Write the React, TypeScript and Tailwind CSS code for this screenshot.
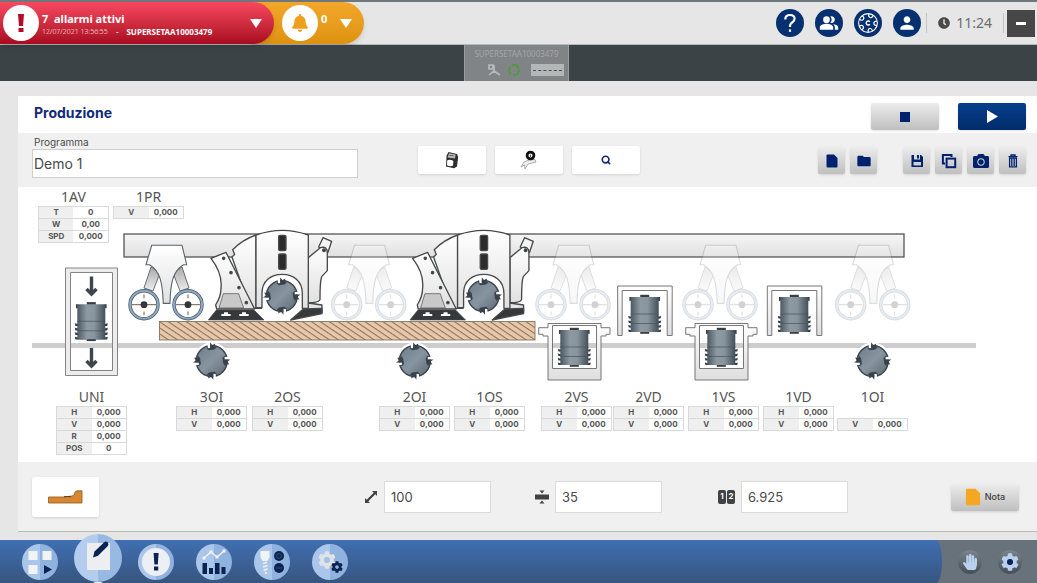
import { useState } from 'react';
import type { ReactNode } from 'react';
import { Search } from 'lucide-react';
import { FaBell, FaCamera, FaClock, FaCog, FaHandPaper } from 'react-icons/fa';
import { MdFolder, MdPeopleAlt, MdPerson } from 'react-icons/md';

// --- DATI DELLE STAZIONI ---
type Stazione = { nome: string; x: number; righe: [string, string][]; vuote?: number };

const LARGHEZZA = 1019;

const STAZIONI_ALTE: Stazione[] = [
  { nome: '1AV', x: 20, righe: [['T', '0'], ['W', '0,00'], ['SPD', '0,000']] },
  { nome: '1PR', x: 95, righe: [['V', '0,000']] },
];

const HV: [string, string][] = [['H', '0,000'], ['V', '0,000']];

const STAZIONI_BASSE: Stazione[] = [
  { nome: 'UNI', x: 38, righe: [...HV, ['R', '0,000'], ['POS', '0']] },
  { nome: '3OI', x: 158, righe: HV },
  { nome: '2OS', x: 234, righe: HV },
  { nome: '2OI', x: 361, righe: HV },
  { nome: '1OS', x: 436, righe: HV },
  { nome: '2VS', x: 523, righe: HV },
  { nome: '2VD', x: 595, righe: HV },
  { nome: '1VS', x: 670, righe: HV },
  { nome: '1VD', x: 745, righe: HV },
  { nome: '1OI', x: 819, righe: [['V', '0,000']], vuote: 1 },
];

function Lettura({ stazione }: { stazione: Stazione }) {
  return (
    <div className="absolute top-0 w-[71px]" style={{ left: `${(stazione.x / LARGHEZZA) * 100}%` }}>
      <table className="w-full table-fixed border-collapse text-[8px] leading-[11px] font-bold text-[#555]">
        <caption className="h-[19px] text-center font-['Noto_Sans',sans-serif] text-sm leading-[19px] font-normal text-[#555]">
          {stazione.nome}
        </caption>
        <tbody>
          {stazione.vuote ? <tr className="h-3"><td colSpan={2} /></tr> : null}
          {stazione.righe.map(([sigla, valore]) => (
            <tr key={sigla} className="h-3 border border-[#d9d9d9]">
              <th scope="row" className="bg-[#efefef] p-0 text-center">{sigla}</th>
              <td className="bg-white p-0 text-center">{valore}</td>
            </tr>
          ))}
        </tbody>
      </table>
    </div>
  );
}

// --- PEZZI DELLA MACCHINA ---
function Fresa({ x, y, alone }: { x: number; y: number; alone?: boolean }) {
  return (
    <g transform={`translate(${x} ${y})`}>
      {alone && <circle r="18.5" fill="#fff" />}
      <circle r="15.5" fill="url(#acciaio)" stroke="#3d464e" strokeWidth="1.5" />
      {[0, 90, 180, 270].map((a) => (
        <g key={a} transform={`rotate(${a})`}>
          <path d="M-4.2 -17 H-1.6 V-13 H-4.2 Z" fill="#fff" />
          <path d="M-4.6 -16 L-3.8 -12.4 L-1.6 -12.8 L-1.6 -18.8 L0.6 -15.8 L3.6 -17.6 L3 -14.6 L5 -13.4 L2.6 -11.6 L-3 -10.8 L-5 -12.6 Z" fill="#39424a" />
        </g>
      ))}
    </g>
  );
}

function Mandrino({ x, y }: { x: number; y: number }) {
  return (
    <g transform={`translate(${x} ${y})`}>
      <rect x="-4.5" y="-2.2" width="9" height="39" fill="#3b3f42" />
      {[19, 23.5, 28, 32.5].map((d) => (
        <path key={d} d={`M-16.5 ${d} l4 1 h25 l4 -1 l-.6 2.6 h-31.8 z`} fill="#303a42" />
      ))}
      <path d="M-14.7 0 H14.7 V3.5 H14 V35 H-14 V3.5 H-14.7 Z" fill="url(#cilindro)" />
      <path d="M-14.7 0 V4 M14.7 0 V4" stroke="#333c44" strokeWidth="1.2" />
      <path d="M-14 17 H14 M-14 26.5 H14" stroke="#46525c" strokeWidth="0.7" />
    </g>
  );
}

function Pressore({ dx = 0, spento }: { dx?: number; spento?: boolean }) {
  return (
    <g transform={`translate(${dx} 0)`} opacity={spento ? 0.22 : 1} stroke="#5e6265" strokeWidth="0.9">
      <path d="M151 267 L144 288 L153 291 L160 273 Z M182 267 L189 288 L180 291 L173 273 Z" fill="url(#braccio)" />
      <path d="M151.7 245.3 H182 L186.7 264.7 H183.5 C173 271 170.5 282 170 303.4 H163.3 C162.5 282 160 271 149.5 264.7 H146 Z" fill="url(#lamiera)" strokeWidth="1.1" />
      {[144, 188].map((cx) => (
        <g key={cx}>
          <circle cx={cx} cy="304.7" r="14" fill="#fff" stroke="#46586b" strokeWidth="3.4" />
          <circle cx={cx} cy="304.7" r="14" fill="none" stroke="#8fa8c0" strokeWidth="2" />
          <path d={`M${cx - 12} 304.7 H${cx + 12} M${cx} 294.5 v3.8 M${cx} 311.5 v3.8`} stroke="#59463f" strokeWidth="0.9" />
          <circle cx={cx} cy="304.7" r="3.4" fill="#33363a" stroke="none" />
        </g>
      ))}
    </g>
  );
}

function Testa({ dx = 0 }: { dx?: number }) {
  return (
    <g transform={`translate(${120 + dx} 225) scale(0.3333)`} stroke="#47494b" strokeWidth="4" strokeLinejoin="round">
      <path d="M596 66 L609 38 L635 49 L624 82 Z" fill="#f5f5f5" />
      <path d="M565 98 L601 68 Q622 62 622 84 V137 L605 155 Q600 168 600 224 Q596 233 565 233 Z" fill="url(#lamiera)" />
      <circle cx="612" cy="76" r="4" fill="#333" />
      <path d="M565 234 L606 240 V262 H550 Z" fill="#e4e4e4" />
      <path d="M512 285 L550 252 L606 250 V266 Z" fill="#36393b" />
      <path d="M336 96 L344 88 L338 74 Q368 44 408 30 V250 H390 Z" fill="url(#lamiera)" />
      <path d="M408 30 Q487 2 565 30 V250 H547 V205 C547 168 520 148 487 148 C452 148 426 168 426 205 V248 H408 Z" fill="url(#lamiera)" />
      <path d="M407 250 H426" />
      <rect x="476" y="31" width="22" height="46" rx="4" fill="#2b2b2b" />
      <rect x="476" y="87" width="22" height="46" rx="4" fill="#2b2b2b" />
      <path d="M273 100 L318 82 L404 252 H290 L287 240 Q303 215 303 190 Q308 145 273 100 Z" fill="url(#lamiera)" />
      <path d="M310 206 H356 L371 249 H297 Z" fill="#c8c8c8" strokeWidth="2" />
      {[[311, 100], [333, 143], [357, 188], [379, 233]].map(([cx, cy]) => (
        <circle key={cy} cx={cx} cy={cy} r="3.5" fill="#333" />
      ))}
      <path d="M289 255 H402 L432 285 H265 Z" fill="#36393b" strokeWidth="2" />
      <path d="M312 262 h12 v5 h8 v6 h-28 v-6 h8 z M366 262 h12 v5 h8 v6 h-28 v-6 h8 z" fill="#fff" stroke="none" />
    </g>
  );
}

function Cassetta({ dx = 0 }: { dx?: number }) {
  return (
    <g transform={`translate(${dx} 0)`}>
      <path
        d="M548 323.5 H601 V327.7 H610 V334.3 H606 V336 H601 V380 H548 V336 H543 V334.3 H538.7 V327.7 H548 Z M552.5 325.5 V368.5 H596.5 V325.5 Z"
        fill="url(#telaio)" fillRule="evenodd" stroke="#777" strokeWidth="1"
      />
      <Mandrino x={574.3} y={330} />
    </g>
  );
}

function Portale({ x }: { x: number }) {
  return (
    <g transform={`translate(${x} 0)`}>
      <path d="M-27 286 H27.5 V335.5 H22.5 V290.5 H-22.5 V335.5 H-27 Z" fill="url(#telaio)" stroke="#777" strokeWidth="1" />
      <Mandrino x={0} y={297} />
    </g>
  );
}

function SchemaMacchina() {
  return (
    <svg viewBox="18 187 1019 200" className="block w-full" role="img" aria-label="Schema macchina">
      <defs>
        <linearGradient id="lamiera" x1="0" y1="0" x2="0" y2="1">
          <stop offset="0" stopColor="#fff" />
          <stop offset="1" stopColor="#e0e0e0" />
        </linearGradient>
        <linearGradient id="trave" x1="0" y1="0" x2="0" y2="1">
          <stop offset="0" stopColor="#f6f6f6" />
          <stop offset="1" stopColor="#e0e0e0" />
        </linearGradient>
        <linearGradient id="telaio" x1="0" y1="0" x2="0" y2="1">
          <stop offset="0" stopColor="#fff" />
          <stop offset="1" stopColor="#dedede" />
        </linearGradient>
        <linearGradient id="braccio" x1="0" y1="0" x2="0" y2="1">
          <stop offset="0" stopColor="#aaa" />
          <stop offset="1" stopColor="#eee" />
        </linearGradient>
        <linearGradient id="acciaio" x1="0" y1="0" x2="1" y2="1">
          <stop offset="0" stopColor="#6c7b86" />
          <stop offset="0.5" stopColor="#8795a0" />
          <stop offset="1" stopColor="#5b6872" />
        </linearGradient>
        <linearGradient id="cilindro">
          <stop offset="0" stopColor="#47545e" />
          <stop offset="0.35" stopColor="#8d9aa3" />
          <stop offset="0.6" stopColor="#87959e" />
          <stop offset="1" stopColor="#3f4b55" />
        </linearGradient>
        <pattern id="legno" width="20" height="5" patternUnits="userSpaceOnUse" patternTransform="rotate(34)">
          <rect width="20" height="5" fill="#e8c8a8" />
          <rect width="20" height="1.1" y="2" fill="#8d7460" />
        </pattern>
      </defs>

      {/* piano di lavoro e trave */}
      <rect x="32" y="343" width="944" height="5" fill="#cdcdcd" />
      <rect x="124" y="234" width="780" height="23" fill="url(#trave)" stroke="#555" strokeWidth="1.3" />

      {/* gruppo universale */}
      <path d="M65.5 268 H117.5 V375.5 H65.5 Z M70.5 272.5 V370.5 H112.5 V272.5 Z" fill="#ececec" fillRule="evenodd" stroke="#858585" strokeWidth="1" />
      <path d="M91.5 276.5 V292 M86.5 289 L91.5 294 L96.5 289 M91.5 348 V364 M86.5 361 L91.5 366 L96.5 361" fill="none" stroke="#3d464e" strokeWidth="3.4" />
      <Mandrino x={91.3} y={304.3} />

      <Pressore />
      <Pressore dx={202.7} spento />
      <Pressore dx={407} spento />
      <Pressore dx={554} spento />
      <Pressore dx={706.7} spento />

      <Testa />
      <Testa dx={201.6} />
      <Fresa x={281.8} y={296} />
      <Fresa x={483.4} y={296} />

      <rect x="159.5" y="321.5" width="375.5" height="18.5" fill="url(#legno)" stroke="#857463" strokeWidth="0.9" />

      <Fresa x={211.7} y={361} alone />
      <Fresa x={414.8} y={361} alone />
      <Fresa x={872.7} y={361} alone />

      <Cassetta />
      <Cassetta dx={147} />
      <Portale x={644.7} />
      <Portale x={794.3} />
    </svg>
  );
}

// --- ICONE ---
function IconaAiuto() {
  return (
    <svg viewBox="0 0 14 20" className="h-5 w-3.5" fill="none" stroke="currentColor" strokeWidth="2.2">
      <path d="M2.4 6.6 V5.6 Q2.4 2 7 2 Q11.6 2 11.6 5.6 Q11.6 7.8 9.4 9.2 Q7 10.8 7 12.6 V14" />
      <path d="M7 16.4 V18.8" />
    </svg>
  );
}

function IconaFile({ className }: { className: string }) {
  return (
    <svg viewBox="0 0 12 14" className={className} fill="currentColor">
      <path d="M1.5 0.5 H8 L11.5 4 V12.5 Q11.5 13.5 10.5 13.5 H1.5 Q0.5 13.5 0.5 12.5 V1.5 Q0.5 0.5 1.5 0.5 Z" />
    </svg>
  );
}

function IconaSalva() {
  return (
    <svg viewBox="0 0 14 14" className="size-3.5" fill="currentColor">
      <path fillRule="evenodd" d="M1.5 1 H4 V5.5 H10 V1 H11 L13 3 V13 H1.5 Z M3.5 8 V11.5 H11 V8 Z M7 1 H9 V4.4 H7 Z" />
    </svg>
  );
}

function IconaCopia() {
  return (
    <svg viewBox="0 0 16 16" className="size-4" fill="none" stroke="currentColor" strokeWidth="2">
      <path d="M4 10.5 H1.9 V1.9 H10.5 V4" />
      <rect x="5.6" y="5.6" width="8.6" height="8.6" />
    </svg>
  );
}

function IconaCestino() {
  return (
    <svg viewBox="0 0 12 14" className="h-3.5 w-3" fill="none" stroke="currentColor" strokeWidth="1.3">
      <path d="M1.5 2.6 H10.5 M4 2.4 V1 H8 V2.4 M2.6 4.2 V12.8 H9.4 V4.2 M4.8 4.2 V12 M7.2 4.2 V12 M2 4.2 H10" />
    </svg>
  );
}

function IconaGlobo() {
  return (
    <svg viewBox="0 0 24 24" className="size-6" fill="none" stroke="#fff" strokeWidth="1.1">
      <circle cx="12" cy="12" r="9.4" />
      <path d="M13.8 10.8 A2 2 0 1 0 13.8 13.2" strokeWidth="1.5" />
      {[20, 92, 164, 236, 308].map((a) => (
        <path key={a} transform={`rotate(${a} 12 12)`} d="M9.8 3 Q9.8 6.2 12 6.2 Q14.2 6.2 14.2 3" />
      ))}
    </svg>
  );
}

function IconaTimer() {
  return (
    <svg viewBox="0 0 14 18" className="h-[18px] w-3.5">
      <path d="M3.5 1 L12 3 L13.2 6 L12 15.5 L9 17.3 L1 15.5 L1.6 4.5 Z" fill="#2e2e2e" />
      <path d="M4 2.2 L10.6 3.4 L10 7.6 L2.6 6.6 Z" fill="#b5b5b5" />
      <path d="M2.2 9.5 Q5 8 8.4 10 L8 14.8 Q5 16 2 14.2 Z" fill="#fff" />
      <path d="M4.4 4.5 H8.5" stroke="#555" strokeWidth="0.8" />
    </svg>
  );
}

function IconaUtensile() {
  return (
    <svg viewBox="0 0 18 20" className="h-5 w-[18px]">
      <path d="M1 17 L4 12 L9 10 L15 9.5 L16 12 L8 14 L5 19 L4.5 15 Z" fill="#eee" stroke="#999" strokeWidth="0.8" />
      <circle cx="10.5" cy="5.5" r="3.4" fill="#fff" stroke="#111" strokeWidth="2.8" />
      <path d="M10.5 4.5 V7" stroke="#555" strokeWidth="1" />
    </svg>
  );
}

function IconaDashboard() {
  return (
    <svg viewBox="0 0 36 36" className="size-9">
      <path d="M6.5 7 h9 v9 h-9 z M20.5 7 h9 v9 h-9 z M6.5 21 h9 v9 h-9 z" fill="#f2f3f5" />
      <path d="M22 21 L30 25.5 L22 30 Z" fill="#0a2350" />
    </svg>
  );
}

function IconaEditor() {
  return (
    <svg viewBox="0 0 48 48" className="size-12">
      <path d="M13 9 H36 V36 H13 Z" fill="#eceef1" />
      <path d="M19 23.5 L20.5 17.6 L30.2 8.2 Q32 6.8 33.8 8.6 Q35.2 10.3 33.8 12 L24 21.8 Z" fill="#0a2350" />
    </svg>
  );
}

function IconaGrafico() {
  return (
    <svg viewBox="0 0 36 36" className="size-9">
      <path d="M8 14 L15 8 L21 13 L28 7" fill="none" stroke="#eef0f3" strokeWidth="1.6" />
      <path d="M6.5 12.5 h3 v3 h-3 z M13.5 6.5 h3 v3 h-3 z M19.5 11.5 h3 v3 h-3 z M26.5 5.5 h3 v3 h-3 z" fill="#f2f3f5" />
      <path d="M6.5 19 h4.5 v11 h-4.5 z M13 24 h4 v6 h-4 z M19 19 h4.5 v11 h-4.5 z M25.5 23 h4 v7 h-4 z" fill="#0a2350" />
    </svg>
  );
}

function IconaPunte() {
  return (
    <svg viewBox="0 0 36 36" className="size-9">
      <path d="M6.5 7 H15.5 V13 L13.5 17 H8.5 L6.5 13 Z" fill="#f2f3f5" />
      <path d="M9 19.5 L13 18.5 M9 23 L13.5 21.5 M9.5 26.5 L13.5 25 M11 29.5 L13 28.5" stroke="#f2f3f5" strokeWidth="1.8" />
      <circle cx="25" cy="12" r="5" fill="#0a2350" />
      <circle cx="25" cy="24" r="5" fill="#0a2350" />
      <circle cx="25" cy="12" r="2.4" fill="none" stroke="#46618f" strokeWidth="0.7" />
      <path d="M22 24 H28" stroke="#46618f" strokeWidth="0.7" />
    </svg>
  );
}

// --- VOCI DEL MENU IN BASSO ---
const MENU: { id: string; nome: string; icona: ReactNode }[] = [
  { id: 'dashboard', nome: 'Dashboard', icona: <IconaDashboard /> },
  { id: 'editor', nome: 'Editor', icona: <IconaEditor /> },
  {
    id: 'allarmi',
    nome: 'Allarmi',
    icona: (
      <svg viewBox="0 0 36 36" className="size-9">
        <circle cx="18" cy="18" r="14" fill="#eceff3" />
        <path d="M15.6 9 H20.6 L19.8 20.5 H16.4 Z M16 22.5 H20.2 V26.5 H16 Z" fill="#0a2350" />
      </svg>
    ),
  },
  { id: 'report', nome: 'Report', icona: <IconaGrafico /> },
  { id: 'utensili', nome: 'Utensili', icona: <IconaPunte /> },
  {
    id: 'impostazioni',
    nome: 'Impostazioni',
    icona: (
      <span className="relative size-9">
        <FaCog className="absolute top-[7px] left-1.5 size-[18px] text-[#dfe2e6]" />
        <span className="absolute top-[13px] left-3 size-1.5 rounded-full bg-[#a3c0e6]" />
        <FaCog className="absolute top-[17px] left-[19px] size-3 text-[#0a2350]" />
      </span>
    ),
  },
];

const TONDO = 'flex size-7 items-center justify-center rounded-full bg-[#06306f] text-white';
const TASTO_GRIGIO = 'flex h-[27px] items-center justify-center rounded-xs bg-linear-to-b from-[#ececec] to-[#bfbfbf] text-[#00226e] shadow-sm';
const TASTO_BIANCO = 'flex h-7 w-[68px] items-center justify-center rounded-xs bg-white shadow-sm';
const CAMPO = 'h-8 w-[107px] border border-[#dcdcdc] bg-white px-1.5 text-[13px] text-[#4a4a4a] outline-none';

export default function App() {
  const [programma, setProgramma] = useState('Demo 1');
  const [lunghezza, setLunghezza] = useState('100');
  const [spessore, setSpessore] = useState('35');
  const [velocita, setVelocita] = useState('6.925');
  const [attivo, setAttivo] = useState('editor');

  return (
    <div className="flex min-h-screen flex-col bg-[#e6e6e6] font-['Inter',sans-serif]">
      {/* --- BARRA SUPERIORE --- */}
      <header className="flex h-[45px] items-center justify-between border-t-2 border-b border-t-[#6f787d] border-b-[#b5b9bb] bg-[#e6e6e6] font-['Noto_Sans',sans-serif]">
        <div className="flex h-full">
          <button className="relative z-10 flex h-full w-[274px] items-center gap-[3px] rounded-r-3xl bg-linear-to-b from-[#f9485f] to-[#a80a20] pr-3 pl-[3px] text-left text-white shadow-md">
            <span className="flex size-9 shrink-0 items-center justify-center rounded-full bg-white">
              <svg viewBox="0 0 8 20" className="h-5 w-2" fill="#b30d2a">
                <path d="M1 1 H7 L6 13 H2 Z M1.5 15 H6.5 V19 H1.5 Z" />
              </svg>
            </span>
            <span className="flex-1 pt-1">
              <span className="block text-[11px] leading-[14px] font-bold whitespace-pre">7  allarmi attivi</span>
              <span className="flex gap-2 text-[8px] leading-3 whitespace-nowrap">
                <span className="font-['Open_Sans',sans-serif] text-[7px] font-light">12/07/2021 13:56:55</span>
                <span>-</span>
                <span className="font-bold">SUPERSETAA10003479</span>
              </span>
            </span>
            <svg viewBox="0 0 12 9" className="h-[9px] w-3" fill="#fff"><path d="M0 0 H12 L6 9 Z" /></svg>
          </button>
          <button className="-ml-6 flex h-full w-[114px] items-center gap-[3px] rounded-r-3xl bg-linear-to-b from-[#f3a72a] to-[#dd930f] pr-3 pl-8 text-white shadow-md">
            <span className="flex size-9 shrink-0 items-center justify-center rounded-full bg-white text-[#eea01c]">
              <FaBell className="size-[18px]" />
            </span>
            <span className="mb-2 flex-1 text-left text-[11px] font-bold">0</span>
            <svg viewBox="0 0 12 9" className="h-[9px] w-3" fill="#fff"><path d="M0 0 H12 L6 9 Z" /></svg>
          </button>
        </div>

        <div className="flex items-center gap-[11px] pr-0.5">
          <button aria-label="Aiuto" className={TONDO}><IconaAiuto /></button>
          <button aria-label="Utenti" className={TONDO}><MdPeopleAlt className="size-5" /></button>
          <button aria-label="Rete" className={TONDO}><IconaGlobo /></button>
          <button aria-label="Profilo" className={TONDO}><MdPerson className="size-5" /></button>
          <span className="-ml-1.5 h-5 w-px bg-[#c4c4c4]" />
          <span className="flex items-center gap-1.5 text-sm text-[#6d6d6d]">
            <FaClock className="size-3 text-[#4a4a4a]" />
            11:24
          </span>
          <span className="h-5 w-px bg-[#c4c4c4]" />
          <button aria-label="Riduci" className="-ml-2 flex h-[27px] w-7 items-center justify-center bg-[#474747]">
            <span className="h-[3px] w-2.5 bg-white" />
          </button>
        </div>
      </header>

      {/* --- MACCHINA COLLEGATA --- */}
      <div className="flex h-9 justify-center bg-[#3c4346] pr-1">
        <button className="flex w-[105px] flex-col items-center border-x border-[#9a9d9f] bg-[#808486] pt-1 font-['Noto_Sans',sans-serif] text-[#a3a6a8]">
          <span className="text-[8px] leading-[10px]">SUPERSETAA10003479</span>
          <span className="flex w-full items-center justify-end gap-1.5 pt-1 pr-1">
            <svg viewBox="0 0 14 14" className="size-3.5" fill="none" stroke="#b9bcbe" strokeWidth="1.6">
              <path d="M2 2 H6 V6 H2 Z M7 2 V8 L2 12 M7 8 L13 12" />
            </svg>
            <svg viewBox="0 0 14 14" className="size-3.5" fill="none" stroke="#4e9a3c" strokeWidth="2">
              <circle cx="7" cy="7" r="5" strokeDasharray="8.5 2" />
            </svg>
            <span className="ml-1 flex h-3 w-[33px] items-center bg-[#b4b7b8] px-0.5">
              <span className="w-full border-t border-dashed border-[#4c5052]" />
            </span>
          </span>
        </button>
      </div>

      {/* --- PANNELLO PRODUZIONE --- */}
      <main className="mt-[15px] mb-2 ml-[18px] flex-1 border-b border-[#b9b9b0] bg-[#f0f0f0]">
        <div className="flex h-[37px] items-center justify-between bg-white pr-[11px] pl-4">
          <h1 className="pb-1 text-sm font-bold text-[#102a7a]">Produzione</h1>
          <div className="flex gap-[19px] pt-1">
            <button aria-label="Ferma" className={`${TASTO_GRIGIO} w-[68px]`}>
              <span className="size-2.5 bg-[#00226e]" />
            </button>
            <button aria-label="Avvia" className="flex h-[27px] w-[68px] items-center justify-center rounded-xs bg-linear-to-b from-[#063f8f] to-[#022c68] shadow-sm">
              <svg viewBox="0 0 11 13" className="h-[13px] w-[11px]" fill="#fff"><path d="M0 0 L11 6.5 L0 13 Z" /></svg>
            </button>
          </div>
        </div>

        <div className="flex h-[54px] items-end pr-[11px] pb-[9px] pl-[14px]">
          <div className="flex flex-1 items-end gap-15">
            <div className="w-[326px]">
              <label htmlFor="programma" className="block pl-0.5 text-[10px] leading-[13px] text-[#4a4a4a]">Programma</label>
              <input
                id="programma"
                value={programma}
                onChange={(e) => setProgramma(e.target.value)}
                className="block h-[29px] w-full border border-[#cfcfcf] bg-white px-px text-sm text-[#4a4a4a] outline-none"
              />
            </div>
            <div className="flex gap-[9px] pb-1">
              <button aria-label="Timer" className={TASTO_BIANCO}><IconaTimer /></button>
              <button aria-label="Utensile" className={TASTO_BIANCO}><IconaUtensile /></button>
              <button aria-label="Cerca" className={TASTO_BIANCO}><Search className="size-2.5 text-[#102a7a]" strokeWidth={4} /></button>
            </div>
          </div>
          <div className="flex gap-[26px] pb-1">
            <div className="flex gap-[5px]">
              <button aria-label="Nuovo" className={`${TASTO_GRIGIO} w-[27px]`}><IconaFile className="h-3.5 w-3" /></button>
              <button aria-label="Apri" className={`${TASTO_GRIGIO} w-[27px]`}><MdFolder className="size-4" /></button>
            </div>
            <div className="flex gap-[5px]">
              <button aria-label="Salva" className={`${TASTO_GRIGIO} w-[27px]`}><IconaSalva /></button>
              <button aria-label="Copia" className={`${TASTO_GRIGIO} w-[27px]`}><IconaCopia /></button>
              <button aria-label="Foto" className={`${TASTO_GRIGIO} w-[27px]`}><FaCamera className="size-4" /></button>
              <button aria-label="Elimina" className={`${TASTO_GRIGIO} w-[27px]`}><IconaCestino /></button>
            </div>
          </div>
        </div>

        <section className="relative bg-white">
          <div className="absolute inset-x-0 top-0">
            {STAZIONI_ALTE.map((s) => <Lettura key={s.nome} stazione={s} />)}
          </div>
          <SchemaMacchina />
          <div className="relative h-[75px]">
            {STAZIONI_BASSE.map((s) => <Lettura key={s.nome} stazione={s} />)}
          </div>
        </section>

        <div className="flex h-[68px] items-center justify-between pt-0.5 pr-[18px] pl-[14px]">
          <button aria-label="Profilo pezzo" className="flex h-10 w-[67px] items-center justify-center rounded-xs bg-white shadow-sm">
            <svg viewBox="0 0 35 14" className="h-3.5 w-[35px]">
              <path d="M0.5 7 H16 L24 6 Q27 5.5 27 2 L29 0.8 H34 V13 H0.5 Z" fill="#d9862e" stroke="#8a5a28" strokeWidth="0.8" />
              <path d="M16 6.6 H23" stroke="#5a4022" strokeWidth="1" />
            </svg>
          </button>
          <div className="flex items-center pl-[162px]">
            <div className="flex items-center gap-1.5">
              <label htmlFor="lunghezza" aria-label="Lunghezza">
                <svg viewBox="0 0 14 14" className="size-3.5" fill="#3f4346">
                  <path d="M8 1 H13 V6 L11.3 4.3 L4.3 11.3 L6 13 H1 V8 L2.7 9.7 L9.7 2.7 Z" />
                </svg>
              </label>
              <input id="lunghezza" value={lunghezza} onChange={(e) => setLunghezza(e.target.value)} className={CAMPO} />
            </div>
            <div className="ml-11 flex items-center gap-1.5">
              <label htmlFor="spessore" aria-label="Spessore">
                <svg viewBox="0 0 14 14" className="size-3.5" fill="#3f4346">
                  <path d="M0 4.6 H14 V9.4 H0 Z M4.5 0.5 H9.5 L7 3.6 Z M4.5 13.5 H9.5 L7 10.4 Z" />
                </svg>
              </label>
              <input id="spessore" value={spessore} onChange={(e) => setSpessore(e.target.value)} className={CAMPO} />
            </div>
            <div className="ml-14 flex items-center gap-1.5">
              <label htmlFor="velocita" aria-label="Velocità" className="flex gap-px text-[8px] leading-3 font-bold text-white">
                <span className="h-3.5 w-2 rounded-xs bg-[#3f4346] text-center">1</span>
                <span className="h-3.5 w-2 rounded-xs bg-[#3f4346] text-center">2</span>
              </label>
              <input id="velocita" value={velocita} onChange={(e) => setVelocita(e.target.value)} className={CAMPO} />
            </div>
          </div>
          <button className={`${TASTO_GRIGIO} w-[68px] gap-1`}>
            <IconaFile className="h-[18px] w-4 text-[#f5a623]" />
            <span className="text-[9px] font-medium text-[#3c3c3c]">Nota</span>
          </button>
        </div>
      </main>

      {/* --- MENU INFERIORE --- */}
      <nav className="flex h-[43px] bg-[#67727a]">
        <div className="flex flex-1 items-center gap-[22px] rounded-r-[6px_22px] bg-linear-to-b from-[#406fb2] to-[#37557f] pl-[22px]">
          {MENU.map((voce) => (
            <button
              key={voce.id}
              aria-label={voce.nome}
              onClick={() => setAttivo(voce.id)}
              className={
                voce.id === attivo
                  ? 'relative -mx-1.5 -mt-2 flex size-12 items-center justify-center rounded-full bg-linear-to-r from-[#b4cdee] from-50% to-[#98b9e2] to-50%'
                  : 'flex size-9 items-center justify-center rounded-full bg-linear-to-r from-[#aac6ea] from-50% to-[#8fb2df] to-50%'
              }
            >
              {voce.icona}
              {voce.id === attivo && <span className="absolute top-full left-5 h-0.5 w-2 bg-[#dfe8f4]" />}
            </button>
          ))}
        </div>
        <div className="flex items-center gap-4 pr-[15px] pl-4">
          <button aria-label="Manuale" className="flex size-6 items-center justify-center rounded-full bg-linear-to-b from-[#7b858b] to-[#454e54] text-[#b9d0f0]">
            <FaHandPaper className="size-4" />
          </button>
          <button aria-label="Configurazione" className="relative flex size-6 items-center justify-center rounded-full bg-linear-to-b from-[#7b858b] to-[#454e54] text-[#b9d0f0]">
            <FaCog className="size-[18px]" />
            <span className="absolute size-1.5 rounded-full bg-[#0a2350]" />
          </button>
        </div>
      </nav>
    </div>
  );
}
